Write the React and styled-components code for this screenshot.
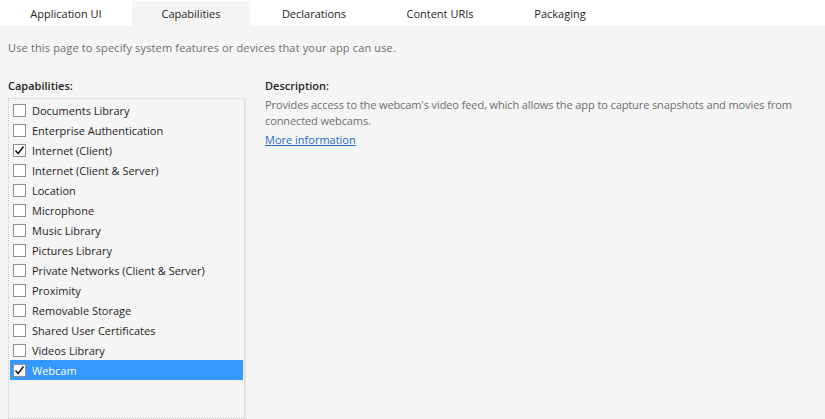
import React from 'react'
import styled, { createGlobalStyle } from 'styled-components'

const Global = createGlobalStyle`
  html, body {
    margin: 0;
    padding: 0;
    background: #f5f5f5;
  }
  body {
    font-family: "Open Sans", "Noto Sans", sans-serif;
    font-size: 11px;
    color: #1e1e1e;
  }
`

const Page = styled.div`
  width: 825px;
  height: 419px;
  overflow: hidden;
  background: #f5f5f5;
  display: flex;
  flex-direction: column;
`

const TabBar = styled.div`
  display: flex;
  height: 26px;
  background: #ffffff;
  padding-top: 1px;
  box-sizing: border-box;
`

const Tab = styled.div`
  width: ${p => p.w}px;
  display: flex;
  align-items: center;
  justify-content: center;
  color: #1e1e1e;
  background: ${p => (p.active ? '#f5f5f5' : 'transparent')};
`

const Intro = styled.div`
  padding: 14px 0 0 8px;
  color: #6d6d6d;
  height: 20px;
  letter-spacing: 0.15px;
`

const Body = styled.div`
  display: flex;
  padding: 19px 0 0 8px;
  gap: 19px;
  flex: 1;
  min-height: 0;
`

const LeftCol = styled.div`
  width: 238px;
  display: flex;
  flex-direction: column;
`

const Heading = styled.div`
  font-weight: 600;
  color: #1e1e1e;
  height: 14px;
  line-height: 14px;
  margin-bottom: 5px;
`

const ListBox = styled.div`
  flex: 1;
  border: 1px dotted #c8c8c8;
  border-right: 2px solid #e2e2e2;
  padding: 1px 1px;
  display: flex;
  flex-direction: column;
`

const Row = styled.div`
  height: 20px;
  flex-shrink: 0;
  display: flex;
  align-items: center;
  padding-left: 3px;
  gap: 6px;
  background: ${p => (p.selected ? '#3399ff' : 'transparent')};
  color: ${p => (p.selected ? '#ffffff' : '#1e1e1e')};
`

const Box = styled.span`
  width: 13px;
  height: 13px;
  box-sizing: border-box;
  border: 1px solid #8f8f8f;
  background: #ffffff;
  display: flex;
  align-items: center;
  justify-content: center;
`

const RightCol = styled.div`
  flex: 1;
  display: flex;
  flex-direction: column;
`

const DescText = styled.div`
  color: #6d6d6d;
  line-height: 16px;
  margin-top: -1px;
  width: 545px;
  letter-spacing: -0.1px;
`

const MoreLink = styled.a`
  color: #1e6ac8;
  text-decoration: underline;
  margin-top: 4px;
  line-height: 14px;
  align-self: flex-start;
  cursor: pointer;
`

const tabs = [
  { label: 'Application UI', w: 132 },
  { label: 'Capabilities', w: 118, active: true },
  { label: 'Declarations', w: 128 },
  { label: 'Content URIs', w: 124 },
  { label: 'Packaging', w: 116 },
]

const caps = [
  { label: 'Documents Library' },
  { label: 'Enterprise Authentication' },
  { label: 'Internet (Client)', checked: true },
  { label: 'Internet (Client & Server)' },
  { label: 'Location' },
  { label: 'Microphone' },
  { label: 'Music Library' },
  { label: 'Pictures Library' },
  { label: 'Private Networks (Client & Server)' },
  { label: 'Proximity' },
  { label: 'Removable Storage' },
  { label: 'Shared User Certificates' },
  { label: 'Videos Library' },
  { label: 'Webcam', checked: true, selected: true },
]

const Check = () => (
  <svg width="11" height="11" viewBox="0 0 11 11">
    <path d="M1.5 5.5 L4.2 8.5 L9.5 1.5" fill="none" stroke="#1e1e1e" strokeWidth="1.6" />
  </svg>
)

const App = () => {
  return (
    <Page>
      <Global />
      <TabBar>
        {tabs.map(t => (
          <Tab key={t.label} w={t.w} active={t.active}>{t.label}</Tab>
        ))}
      </TabBar>
      <Intro>Use this page to specify system features or devices that your app can use.</Intro>
      <Body>
        <LeftCol>
          <Heading>Capabilities:</Heading>
          <ListBox>
            {caps.map(c => (
              <Row key={c.label} selected={c.selected}>
                <Box>{c.checked && <Check />}</Box>
                {c.label}
              </Row>
            ))}
          </ListBox>
        </LeftCol>
        <RightCol>
          <Heading>Description:</Heading>
          <DescText>
            Provides access to the webcam's video feed, which allows the app to capture snapshots and movies from connected webcams.
          </DescText>
          <MoreLink>More information</MoreLink>
        </RightCol>
      </Body>
    </Page>
  )
}

export default App
